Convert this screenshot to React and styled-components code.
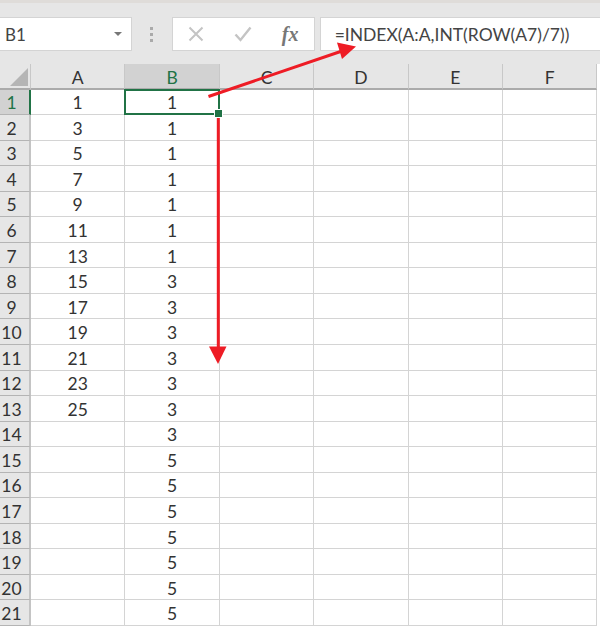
import styled, { createGlobalStyle } from "styled-components";

const COLUMNS = ["A", "B", "C", "D", "E", "F"];
const A_VALUES = [1, 3, 5, 7, 9, 11, 13, 15, 17, 19, 21, 23, 25];
const B_VALUES = [1, 1, 1, 1, 1, 1, 1, 3, 3, 3, 3, 3, 3, 3, 5, 5, 5, 5, 5, 5, 5];
const ROW_COUNT = 21;

const GlobalStyle = createGlobalStyle`
  html, body {
    margin: 0;
    padding: 0;
    background: #fff;
    overflow: hidden;
  }
  body {
    font-family: Lato, "Liberation Sans", sans-serif;
    color: #333;
  }
`;

const Sheet = styled.div`
  position: relative;
  width: 600px;
  height: 626px;
  overflow: hidden;
  background: #fff;
`;

const TopEdge = styled.div`
  height: 3px;
  background: #dfdcd9;
`;

const FormulaRow = styled.div`
  display: flex;
  align-items: flex-start;
  height: 61px;
  padding-top: 14px;
  box-sizing: border-box;
  background: #e6e6e6;
`;

const NameBox = styled.div`
  display: flex;
  align-items: center;
  justify-content: space-between;
  width: 132px;
  height: 34px;
  padding: 0 5px;
  box-sizing: border-box;
  background: #fff;
  border: 1px solid #d4d4d4;
  border-left: 0;
  font-size: 17px;
  color: #444;
`;

const Caret = styled.span`
  width: 0;
  height: 0;
  margin-right: 4px;
  border-left: 4px solid transparent;
  border-right: 4px solid transparent;
  border-top: 4px solid #777;
`;

const Grip = styled.div`
  display: flex;
  flex-direction: column;
  align-items: center;
  justify-content: center;
  gap: 3px;
  width: 40px;
  height: 34px;
`;

const GripDot = styled.span`
  width: 3px;
  height: 3px;
  background: #aaa;
`;

const ActionBox = styled.div`
  display: flex;
  align-items: center;
  width: 143px;
  height: 34px;
  box-sizing: border-box;
  background: #fff;
  border: 1px solid #d4d4d4;
`;

const ActionSlot = styled.span`
  display: flex;
  align-items: center;
  justify-content: center;
  width: 47px;
`;

const Fx = styled.span`
  font-family: "Liberation Serif", serif;
  font-style: italic;
  font-weight: 700;
  font-size: 20px;
  color: #777;
`;

const FormulaInput = styled.div`
  display: flex;
  align-items: center;
  width: 281px;
  height: 34px;
  margin-left: 5px;
  padding-left: 14px;
  box-sizing: border-box;
  background: #fff;
  border: 1px solid #d4d4d4;
  border-right: 0;
  font-size: 17.5px;
  color: #444;
  white-space: nowrap;
`;

const Grid = styled.div`
  display: grid;
  grid-template-columns: 31px repeat(6, 94.4px);
  grid-template-rows: 25.5px repeat(${ROW_COUNT}, 25.55px);
  background: #fff;
`;

const Corner = styled.div`
  position: relative;
  background: #e6e6e6;
  border-right: 1px solid #c8c8c8;
  border-bottom: 2px solid #ababab;
  box-sizing: border-box;
`;

const CornerMark = styled.span`
  position: absolute;
  right: 2px;
  bottom: 2px;
  width: 0;
  height: 0;
  border-left: 18px solid transparent;
  border-bottom: 18px solid #b5b5b5;
`;

const ColHeader = styled.div`
  display: flex;
  align-items: center;
  justify-content: center;
  box-sizing: border-box;
  padding-top: 3px;
  font-size: 17.5px;
  background: ${(p) => (p.$active ? "#d2d2d2" : "#e6e6e6")};
  color: ${(p) => (p.$active ? "#217346" : "#333")};
  border-right: 1px solid #c8c8c8;
  border-bottom: 2px solid #ababab;
`;

const RowHeader = styled.div`
  display: flex;
  align-items: center;
  justify-content: center;
  box-sizing: border-box;
  padding: 2px 6px 0 0;
  font-size: 17.5px;
  background: ${(p) => (p.$active ? "#d2d2d2" : "#e6e6e6")};
  color: ${(p) => (p.$active ? "#217346" : "#333")};
  border-right: ${(p) => (p.$active ? "2px solid #217346" : "2px solid #c4c4c4")};
  border-bottom: 1px solid #b4b4b4;
`;

const Cell = styled.div`
  display: flex;
  align-items: center;
  justify-content: center;
  box-sizing: border-box;
  padding-top: 2px;
  font-size: 17.5px;
  color: #333;
  border-right: 1px solid #d4d4d4;
  border-bottom: 1px solid #d4d4d4;
`;

const SelectedCell = styled(Cell)`
  position: relative;
  border: 2px solid #217346;
  margin: -1px 0 0 -1px;
`;

const FillHandle = styled.span`
  position: absolute;
  right: -5px;
  bottom: -5px;
  width: 7px;
  height: 7px;
  background: #217346;
  border: 1px solid #fff;
  box-sizing: content-box;
  z-index: 1;
`;

const Arrows = styled.svg`
  position: absolute;
  left: 0;
  top: 0;
  z-index: 2;
  pointer-events: none;
`;

const cellValue = (col, rowIndex) => {
  if (col === "A") return A_VALUES[rowIndex] ?? "";
  if (col === "B") return B_VALUES[rowIndex];
  return "";
};

function Row({ index }) {
  const active = index === 0;
  return (
    <>
      <RowHeader $active={active}>{index + 1}</RowHeader>
      {COLUMNS.map((col) =>
        active && col === "B" ? (
          <SelectedCell key={col}>
            {cellValue(col, index)}
            <FillHandle />
          </SelectedCell>
        ) : (
          <Cell key={col}>{cellValue(col, index)}</Cell>
        )
      )}
    </>
  );
}

export default function App() {
  const rows = Array.from({ length: ROW_COUNT }, (_, i) => i);

  return (
    <Sheet>
      <GlobalStyle />
      <TopEdge />
      <FormulaRow>
        <NameBox>
          B1
          <Caret />
        </NameBox>
        <Grip>
          <GripDot />
          <GripDot />
          <GripDot />
        </Grip>
        <ActionBox>
          <ActionSlot>
            <svg width="16" height="16" viewBox="0 0 16 16">
              <path d="M1.5 1.5L14.5 14.5M14.5 1.5L1.5 14.5" stroke="#c4c4c4" strokeWidth="2" fill="none" />
            </svg>
          </ActionSlot>
          <ActionSlot>
            <svg width="18" height="16" viewBox="0 0 18 16">
              <path d="M1.5 8.5L6.5 14L16.5 1.5" stroke="#c4c4c4" strokeWidth="2.4" fill="none" />
            </svg>
          </ActionSlot>
          <ActionSlot>
            <Fx>fx</Fx>
          </ActionSlot>
        </ActionBox>
        <FormulaInput>=INDEX(A:A,INT(ROW(A7)/7))</FormulaInput>
      </FormulaRow>

      <Grid>
        <Corner>
          <CornerMark />
        </Corner>
        {COLUMNS.map((col) => (
          <ColHeader key={col} $active={col === "B"}>
            {col}
          </ColHeader>
        ))}
        {rows.map((i) => (
          <Row key={i} index={i} />
        ))}
      </Grid>

      <Arrows width="600" height="626" viewBox="0 0 600 626">
        <path d="M208.5 96.5L345 50" stroke="#ee1c25" strokeWidth="3" fill="none" />
        <path d="M356 46.5L337 42.5L342 59Z" fill="#ee1c25" />
        <path d="M218.3 118L218.3 350" stroke="#ee1c25" strokeWidth="3" fill="none" />
        <path d="M209 346.5L226.5 346.5L218 364Z" fill="#ee1c25" />
      </Arrows>
    </Sheet>
  );
}
